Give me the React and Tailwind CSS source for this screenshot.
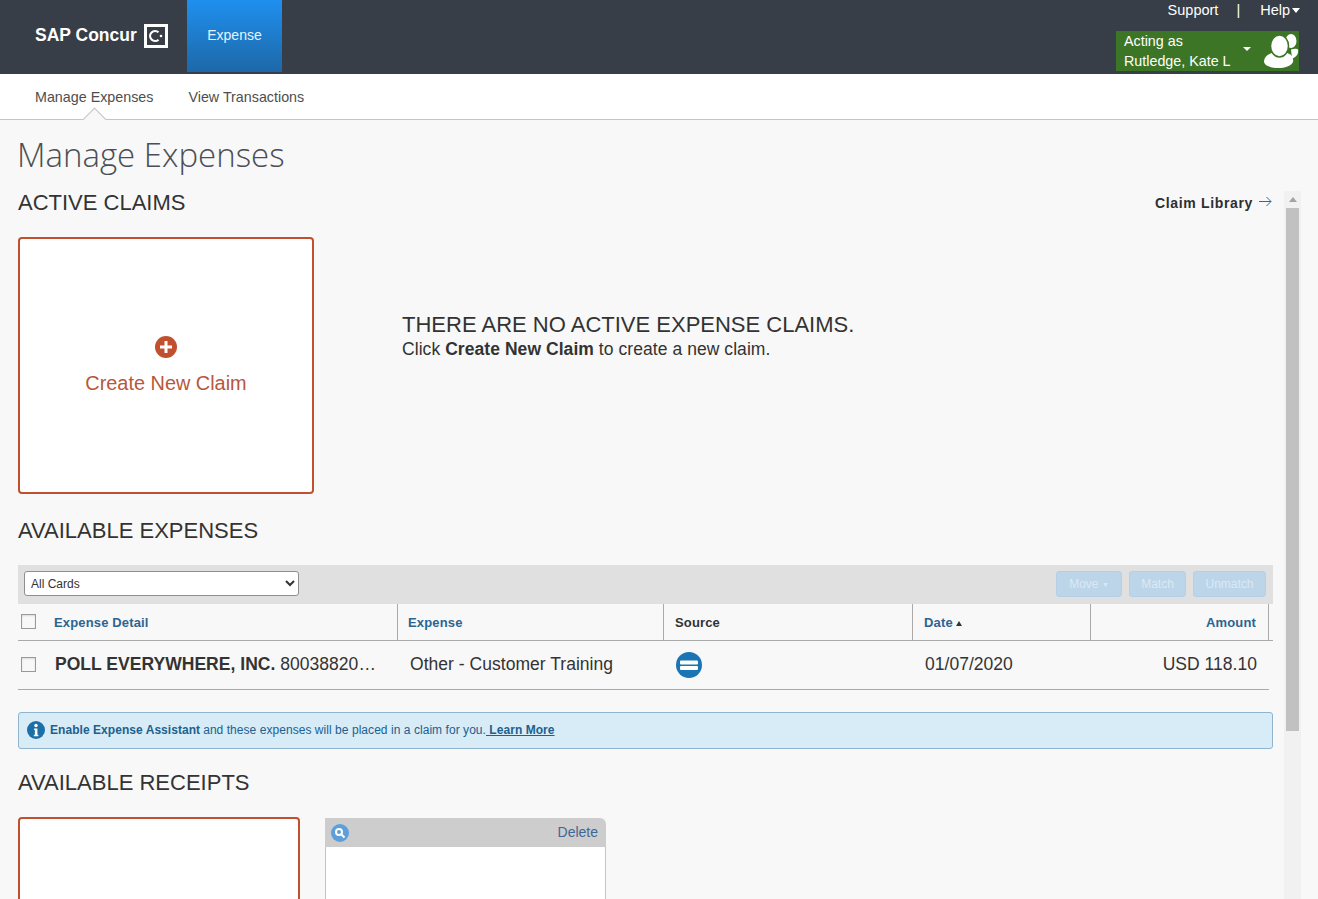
// App.jsx
import React from "react";

const SANS = "font-['Liberation_Sans',Arial,sans-serif]";

const Logo = () => (
  <div className="flex items-center gap-[7px] pl-[35px] w-[187px] pb-[2px]">
    <span className="text-white font-bold text-[17.5px] leading-none">SAP Concur</span>
    <svg width="24" height="24" viewBox="0 0 24 24" className="shrink-0">
      <path d="M0 0h24v24H0z M3 3v18h18V3z" fill="#fff" fillRule="evenodd" />
      <path d="M14.5 8.3A5 5 0 1 0 14.5 15.7" fill="none" stroke="#fff" strokeWidth="2.2" />
      <circle cx="17" cy="12" r="1.3" fill="#fff" />
    </svg>
  </div>
);

const PeopleIcon = () => (
  <svg width="36" height="36" viewBox="0 0 36 36" className="shrink-0">
    <ellipse cx="28" cy="8" rx="5.5" ry="7" fill="#fff" />
    <path d="M28 16.5c3-1 6-1 7 0 1 4-2 8-6 9z" fill="#fff" />
    <path d="M1 29c0-5 4-8 8-9 3 4 12 4 15 0 4 1 7 4 6 9-2 4-8 6-15 6S2 33 1 29z" fill="#fff" />
    <ellipse cx="16.5" cy="13" rx="9" ry="11" fill="#fff" stroke="#3d7527" strokeWidth="1.5" />
  </svg>
);

const TopBar = () => (
  <header className="h-[74px] bg-[#373e48] flex relative">
    <Logo />
    <div className="w-[95px] h-[72px] pb-[2px] bg-gradient-to-b from-[#1e90ef] to-[#1d68a8] flex items-center justify-center text-[#e3f4ff] text-[14px]">
      Expense
    </div>
    <div className="ml-auto w-[203px] pr-[19px] flex flex-col items-end">
      <div className="flex items-center h-[21px] text-white text-[14.5px] -mr-[1px]">
        <span>Support</span>
        <span className="ml-[18px]">|</span>
        <span className="ml-[20px]">Help</span>
        <span className="ml-[2px] w-0 h-0 border-x-[4.5px] border-x-transparent border-t-[5px] border-t-white" />
      </div>
      <div className="mt-[10px] w-[183px] h-[40px] bg-[#3d7527] flex items-center text-white text-[14.3px] leading-[20px]">
        <div className="pl-[8px] w-[127px] whitespace-nowrap">
          <div>Acting as</div>
          <div>Rutledge, Kate L</div>
        </div>
        <span className="mb-[4px] w-0 h-0 border-x-[4.5px] border-x-transparent border-t-[4px] border-t-white" />
        <div className="ml-[12px]">
          <PeopleIcon />
        </div>
      </div>
    </div>
  </header>
);

const SubNav = () => (
  <nav className="h-[46px] pt-[3px] bg-white border-b border-[#c4c4c4] flex items-center text-[14.3px] text-[#4e4e4e] relative">
    <span className="ml-[35px]">Manage Expenses</span>
    <span className="ml-[35px]">View Transactions</span>
    <span className="absolute left-[86px] top-[37px] w-[17px] h-[17px] rotate-45 bg-[#f8f8f8] border-l border-t border-[#c4c4c4]" />
  </nav>
);

const SectionTitle = ({ children }) => (
  <h2 className="text-[22px] leading-[24px] text-[#333] whitespace-nowrap">{children}</h2>
);

const ActiveClaims = () => (
  <section>
    <div className="flex items-center justify-between h-[24px] pr-[1px]">
      <SectionTitle>ACTIVE CLAIMS</SectionTitle>
      <div className="flex items-center gap-[6px] text-[14px] font-bold text-[#2c2f33] tracking-[0.65px]">
        Claim Library
        <svg width="13" height="11" viewBox="0 0 13 11" className="mb-[3px]" fill="none" stroke="#2b6ca8" strokeWidth="1">
          <path d="M0 5.5h12M7.5 1l4.5 4.5L7.5 10" />
        </svg>
      </div>
    </div>
    <div className="flex mt-[22px]">
      <div className="w-[296px] h-[257px] bg-white border-2 border-[#c1502e] rounded-[4px] flex flex-col items-center pt-[97px]">
        <svg width="22" height="22" viewBox="0 0 22 22">
          <circle cx="11" cy="11" r="11" fill="#c1502e" />
          <path d="M11 5v12M5 11h12" stroke="#fff" strokeWidth="3" />
        </svg>
        <div className="mt-[13px] text-[19.9px] leading-[24px] text-[#b8573b]">Create New Claim</div>
      </div>
      <div className="ml-[88px] pt-[76px]">
        <div className="text-[22px] leading-[24px] text-[#333]">THERE ARE NO ACTIVE EXPENSE CLAIMS.</div>
        <div className="text-[17.5px] leading-[24px] text-[#333] tracking-[0.06px]">
          Click <b>Create New Claim</b> to create a new claim.
        </div>
      </div>
    </div>
  </section>
);

const HeaderCell = ({ children, className = "" }) => (
  <div className={`h-full flex items-center border-r border-[#aaa] text-[13px] font-bold tracking-[0.15px] pt-[2px] ${className}`}>
    {children}
  </div>
);

const Checkbox = ({ className = "" }) => (
  <span className={`block w-[15px] h-[15px] border border-[#9a9a9a] bg-[#f8f8f8] shadow-[inset_0_1px_2px_rgba(0,0,0,0.12)] ${className}`} />
);

const ActionButton = ({ children, className = "" }) => (
  <button className={`h-[26px] rounded-[3px] bg-[#bcd5e9] border border-[#b5cfe4] text-[#dbe9f4] text-[12px] ${className}`}>
    {children}
  </button>
);

const ExpenseTable = () => (
  <div className="mt-[22px]">
    <div className="h-[39px] bg-[#e0e0e0] flex items-center pl-[6px] pr-[7px] pb-[2px]">
      <select className="w-[275px] h-[25px] bg-white border border-[#8f8f8f] rounded-[3px] text-[12px] text-[#333] pl-[2px]" defaultValue="All Cards">
        <option>All Cards</option>
      </select>
      <div className="ml-auto flex gap-[7px]">
        <ActionButton className="w-[66px]">
          Move <span className="text-[7px] align-[1px]">▼</span>
        </ActionButton>
        <ActionButton className="w-[57px]">Match</ActionButton>
        <ActionButton className="w-[73px]">Unmatch</ActionButton>
      </div>
    </div>
    <div className="w-[1255px] h-[37px] grid grid-cols-[380px_266px_249px_178px_178px] border-b border-[#aaa]">
      <HeaderCell className="text-[#2d6491] relative pl-[36px]">
        <Checkbox className="absolute left-[3px] top-[10px]" />
        Expense Detail
      </HeaderCell>
      <HeaderCell className="text-[#2d6491] pl-[10px]">Expense</HeaderCell>
      <HeaderCell className="text-[#333] pl-[11px]">Source</HeaderCell>
      <HeaderCell className="text-[#2d6491] pl-[11px]">
        Date
        <span className="ml-[3px] w-0 h-0 border-x-[3px] border-x-transparent border-b-[5px] border-b-[#333]" />
      </HeaderCell>
      <HeaderCell className="text-[#2d6491] justify-end pr-[12px]">Amount</HeaderCell>
    </div>
    <div className="w-[1251px] h-[49px] pb-[2px] grid grid-cols-[380px_266px_249px_178px_178px] items-center border-b border-[#aaa] text-[#333] text-[17.5px] tracking-[0.03px]">
      <div className="flex items-center pl-[3px] whitespace-nowrap">
        <Checkbox className="shrink-0" />
        <span className="ml-[19px] truncate w-[323px]">
          <b>POLL EVERYWHERE, INC.</b> 8003882068 CA
        </span>
      </div>
      <div className="pl-[12px]">Other - Customer Training</div>
      <div className="pl-[12px]">
        <svg width="26" height="26" viewBox="0 0 26 26" className="mt-[2px]">
          <circle cx="13" cy="13" r="13" fill="#1b74b3" />
          <rect x="4" y="8.5" width="18" height="4" rx="1" fill="#fff" />
          <rect x="4" y="14" width="18" height="4" rx="1" fill="#fff" />
        </svg>
      </div>
      <div className="pl-[12px]">01/07/2020</div>
      <div className="text-right pr-[12px]">USD 118.10</div>
    </div>
    <div className="mt-[22px] h-[37px] pb-[2px] rounded-[3px] bg-[#d7ecf7] border border-[#8fb4cd] flex items-center pl-[8px] text-[12px] text-[#20608f] whitespace-nowrap tracking-[0.05px]">
      <svg width="18" height="18" viewBox="0 0 19 19" className="shrink-0 mr-[5px]">
        <circle cx="9.5" cy="9.5" r="9.5" fill="#1d6fa8" />
        <circle cx="9.5" cy="4.8" r="1.8" fill="#fff" />
        <path d="M7.5 8h3.5v6.5h1V16H7.2v-1.5h1.1V9.5H7.5z" fill="#fff" />
      </svg>
      <b>Enable Expense Assistant</b>
      <span className="ml-[3px]">and these expenses will be placed in a claim for you.</span>
      <b className="underline whitespace-pre"> Learn More</b>
    </div>
  </div>
);

const Receipts = () => (
  <section className="mt-[22px]">
    <SectionTitle>AVAILABLE RECEIPTS</SectionTitle>
    <div className="flex mt-[22px] items-start">
      <div className="w-[282px] h-[200px] bg-white border-2 border-[#c1502e] rounded-[4px]" />
      <div className="ml-[25px] mt-[1px] w-[281px]">
        <div className="h-[29px] bg-[#cdcdcd] rounded-tr-[6px] flex items-center justify-between pl-[6px] pr-[8px]">
          <svg width="18" height="18" viewBox="0 0 18 18">
            <circle cx="9" cy="9" r="9" fill="#5c9fdb" />
            <circle cx="8" cy="8" r="3" fill="none" stroke="#fff" strokeWidth="2" />
            <path d="M10 10l3.5 3.5" stroke="#fff" strokeWidth="2" />
          </svg>
          <span className="text-[14px] text-[#3f6795]">Delete</span>
        </div>
        <div className="h-[200px] bg-white border-x border-[#c4c4c4]" />
      </div>
    </div>
  </section>
);

const ScrollBar = () => (
  <div className="w-[17px] ml-[11px] h-[720px] bg-[#f1f1f1] flex flex-col items-center shrink-0">
    <div className="h-[17px] flex items-center">
      <span className="w-0 h-0 border-x-[4px] border-x-transparent border-b-[5px] border-b-[#a3a3a3]" />
    </div>
    <div className="w-[13px] h-[523px] bg-[#c1c1c1]" />
  </div>
);

export default function App() {
  return (
    <div className={`h-[899px] overflow-hidden bg-[#f8f8f8] ${SANS}`}>
      <TopBar />
      <SubNav />
      <main className="pl-[18px]">
        <h1 className="h-[71px] pt-[14px] -ml-[1px] text-[33px] leading-[42px] font-light text-[#4a4f55] font-['Open_Sans',sans-serif]">
          Manage Expenses
        </h1>
        <div className="flex items-start">
          <div className="w-[1255px] shrink-0">
            <ActiveClaims />
            <div className="mt-[25px]">
              <SectionTitle>AVAILABLE EXPENSES</SectionTitle>
            </div>
            <ExpenseTable />
            <Receipts />
          </div>
          <ScrollBar />
        </div>
      </main>
    </div>
  );
}
